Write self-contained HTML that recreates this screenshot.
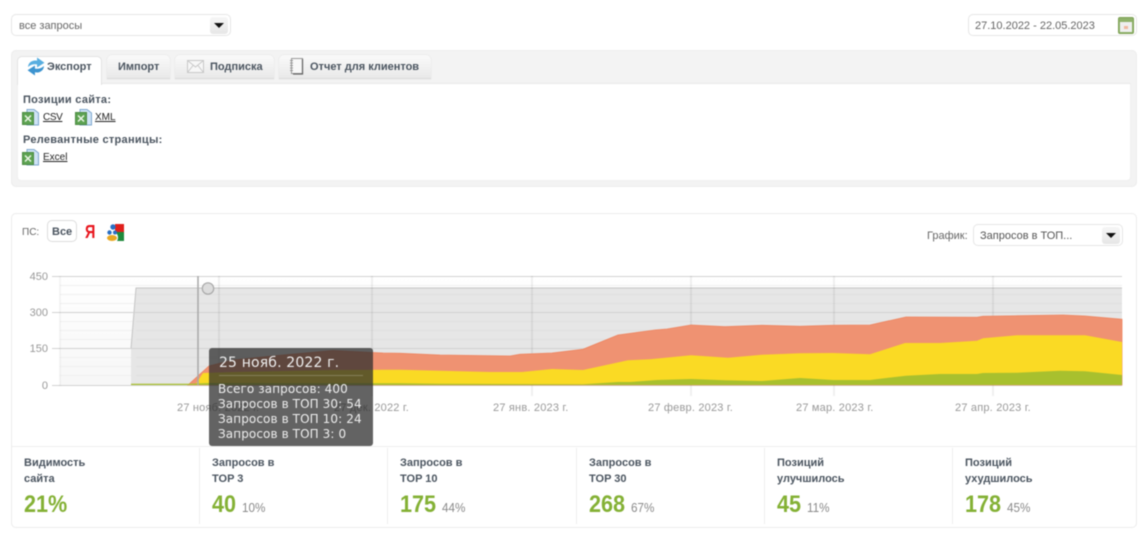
<!DOCTYPE html>
<html lang="ru"><head><meta charset="utf-8"><title>Экспорт</title>
<style>
html,body{margin:0;padding:0;background:#fff}
#p{position:relative;width:1143px;height:534px;overflow:hidden;font-family:"Liberation Sans",sans-serif;font-size:11px;color:#4b5560;filter:blur(.45px)}
#p div,#p a,#p svg{position:absolute}
.t{white-space:nowrap}
.box{background:#fff;border:1px solid #e6e6e6;border-radius:5px;box-sizing:border-box}
.arr{background:linear-gradient(#f6f6f6,#e6e6e6);border-radius:3px}
.arr:after{content:"";position:absolute;left:4px;top:6px;border-left:5px solid transparent;border-right:5px solid transparent;border-top:5px solid #111}
.tab{background:linear-gradient(#fafafa,#e9e9e9);border-radius:5px 5px 0 0;box-sizing:border-box;height:24px;top:54px;border-bottom:1px solid #ddd;box-shadow:0 0 1px #ccc}
.b{font-weight:bold;color:#4b5560}
.h{letter-spacing:.28px}
a.l{color:#222;text-decoration:underline;font-size:10px}
.sl{font-weight:bold;font-size:11px;line-height:16px;color:#4b5560;white-space:nowrap}
.n{font-weight:bold;font-size:24px;color:#84b135;line-height:28px;white-space:nowrap;transform:scaleX(.9);transform-origin:left}
.n span{font-weight:normal;font-size:13px;color:#8a8a8a}
.sep{width:1px;background:#eee;top:448px;height:76px}
.xl{color:#999;font-size:11px;white-space:nowrap;top:402px;letter-spacing:.2px}
.yl{color:#999;font-size:11px;right:auto;white-space:nowrap;text-align:right;width:24px;left:24px}
.tt{font-family:"DejaVu Sans",sans-serif;color:#eee;white-space:nowrap;font-size:12px;line-height:15px;letter-spacing:.1px}
</style></head><body><div id="p">

<div class="box" style="left:11px;top:14px;width:220px;height:22px"></div>
<div class="t" style="left:19px;top:20px;color:#666">все запросы</div>
<div class="arr" style="left:210px;top:17px;width:18px;height:17px"></div>

<div class="box" style="left:968px;top:14px;width:169px;height:22px"></div>
<div class="t" style="left:975px;top:20px;color:#666">27.10.2022 - 22.05.2023</div>
<svg style="left:1118px;top:17px" width="16" height="17" viewBox="0 0 16 17"><rect x=".5" y=".5" width="15" height="16" rx="1.500" fill="#8fb26a" stroke="#7da055"/><rect x="2" y="5" width="12" height="10" fill="#efefef"/><rect x="6" y="9" width="4" height="3" fill="#f0b8a0"/></svg>

<div style="left:11px;top:50px;width:1126px;height:137px;background:#f3f3f3;border:1px solid #ececec;border-radius:5px;box-sizing:border-box"></div>
<div style="left:17px;top:83px;width:1114px;height:98px;background:#fff;border-radius:0 0 4px 4px;border:1px solid #f0f0f0;border-top:1px solid #e8e8e8;box-sizing:border-box"></div>
<div style="left:17px;top:56px;width:85px;height:29px;background:#fff;border:1px solid #e2e2e2;border-bottom:none;border-radius:5px 5px 0 0;box-sizing:border-box"></div>
<svg style="left:26px;top:57px" width="20" height="19" viewBox="0 0 18 18"><path d="M1.500 9.500C1.500 5 6 2.500 10 3.500V.5L17 5.500 10 10V7C7 6.500 4 7 1.500 9.500Z" fill="#58aee0"/><path d="M16.500 8.500C16.500 13 12 15.500 8 14.500V17.500L1 12.500 8 8V11C11 11.500 14 11 16.500 8.500Z" fill="#3d94d0"/></svg>
<div class="t b" style="left:47px;top:61px">Экспорт</div>

<div class="tab" style="left:107px;top:55px;width:63px"></div>
<div class="t b" style="left:118px;top:61px">Импорт</div>
<div class="tab" style="left:175px;top:55px;width:99px"></div>
<svg style="left:187px;top:60px" width="17" height="13" viewBox="0 0 17 13"><rect x=".5" y=".5" width="16" height="12" fill="#f7f7f7" stroke="#c8c8c8"/><path d="M.5 .5 8.500 7 16.500 .5M.5 12.500 6 5.500M16.500 12.500 11 5.500" fill="none" stroke="#c8c8c8"/></svg>
<div class="t b" style="left:210px;top:61px">Подписка</div>
<div class="tab" style="left:279px;top:55px;width:152px"></div>
<svg style="left:290px;top:58px" width="14" height="17" viewBox="0 0 14 17"><rect x="1.500" y=".5" width="11" height="15" fill="#f8f8f8" stroke="#999"/><path d="M0 2.500H3M0 5H3M0 7.500H3M0 10H3M0 12.500H3" stroke="#999"/><path d="M12.500 1V16H3" fill="none" stroke="#666" stroke-width="1.300"/></svg>
<div class="t b" style="left:310px;top:61px">Отчет для клиентов</div>

<div class="t b h" style="left:23px;top:94px">Позиции сайта:</div>
<svg style="left:22px;top:109px" width="17" height="17" viewBox="0 0 17 17"><path d="M5 .5H12L16.500 4V16H5Z" fill="#cfe3f5" stroke="#7fa8cf"/><rect x=".5" y="3.500" width="11" height="12" fill="#5da352" stroke="#4c8b43"/><path d="M3 6.500 9 12.500M9 6.500 3 12.500" stroke="#eaf5e6" stroke-width="1.500"/></svg>
<a class="l t" style="left:43px;top:112px;letter-spacing:-.4px">CSV</a>
<svg style="left:75px;top:109px" width="17" height="17" viewBox="0 0 17 17"><path d="M5 .5H12L16.500 4V16H5Z" fill="#cfe3f5" stroke="#7fa8cf"/><rect x=".5" y="3.500" width="11" height="12" fill="#5da352" stroke="#4c8b43"/><path d="M3 6.500 9 12.500M9 6.500 3 12.500" stroke="#eaf5e6" stroke-width="1.500"/></svg>
<a class="l t" style="left:95px;top:112px">XML</a>
<div class="t b h" style="left:23px;top:134px">Релевантные страницы:</div>
<svg style="left:22px;top:149px" width="17" height="17" viewBox="0 0 17 17"><path d="M5 .5H12L16.500 4V16H5Z" fill="#cfe3f5" stroke="#7fa8cf"/><rect x=".5" y="3.500" width="11" height="12" fill="#5da352" stroke="#4c8b43"/><path d="M3 6.500 9 12.500M9 6.500 3 12.500" stroke="#eaf5e6" stroke-width="1.500"/></svg>
<a class="l t" style="left:43px;top:152px">Excel</a>

<div class="box" style="left:11px;top:213px;width:1126px;height:315px;border-color:#ececec"></div>
<div class="t" style="left:22px;top:227px;color:#666;font-size:10px">ПС:</div>
<div class="box" style="left:47px;top:220px;width:30px;height:22px;border-color:#ddd"></div>
<div class="t b" style="left:52px;top:226px">Все</div>
<div class="t" style="left:85px;top:222px;color:#e8141c;font-size:18px;font-weight:bold;line-height:21px;transform:scaleX(.8);transform-origin:left">Я</div>
<svg style="left:107px;top:224px" width="17" height="17" viewBox="0 0 17 17"><rect x="8" y="0" width="9" height="8" fill="#e0201c"/><path d="M8 8H17V17H10C12 14 11 10 8 8Z" fill="#1f8a3c"/><circle cx="6" cy="3" r="2.700" fill="#2a6fc4"/><circle cx="2.500" cy="8.500" r="2.200" fill="#2a6fc4"/><circle cx="8" cy="8.500" r="2" fill="#2a6fc4"/><ellipse cx="5" cy="14" rx="5" ry="3" fill="#e8a823"/></svg>

<div class="t" style="left:927px;top:230px;color:#666">График:</div>
<div class="box" style="left:973px;top:224px;width:150px;height:22px"></div>
<div class="t" style="left:980px;top:230px;color:#555">Запросов в ТОП...</div>
<div class="arr" style="left:1102px;top:227px;width:18px;height:17px"></div>

<svg style="left:0;top:0" width="1143" height="534" viewBox="0 0 1143 534">
<defs><linearGradient id="w" x1="0" x2="0" y1="0" y2="1"><stop offset="0" stop-color="#fff"/><stop offset="1" stop-color="#f7f7f7"/></linearGradient></defs>
<rect x="60" y="277" width="1062" height="108" fill="url(#w)"/>
<path d="M60 285.500H1122M60 294.500H1122M60 303.500H1122M60 321.500H1122M60 330.500H1122M60 339.500H1122M60 357.500H1122M60 366.500H1122M60 375.500H1122" stroke="#f0f0f0" fill="none"/>
<path d="M131 348.500 136 288H1122V385H131Z" fill="#e6e6e6"/>
<path d="M131 348.500 136 288H1122" fill="none" stroke="#c4c4c4"/>
<path d="M136 294.500H1122M136 303.500H1122M136 321.500H1122M136 330.500H1122M136 339.500H1122M136 357.500H1122M136 366.500H1122M136 375.500H1122" stroke="#e0e0e0" fill="none"/>
<path d="M52 276.500H1122M52 312.500H1122M52 348.500H1122M52 385.500H1122" stroke="#d2d2d2" fill="none"/>
<path d="M60 276V386" stroke="#000" stroke-opacity=".04" stroke-width="2" fill="none"/>
<path d="M219 276V396M372 276V396M532 276V396M691 276V396M834 276V396M993 276V396" stroke="#000" stroke-opacity=".06" stroke-width="2" fill="none"/>
<path d="M188 385 209 366 233 360 283 355 333 350.500 383 353 400 353.300 440 355 510 356 520 354.300 552 353 583 349.300 618 335 655 330 667 329 691 325 725 326.700 762 325.300 800 326.300 833 325.300 870 325 906 317 977 317.300 983 316.300 1063 315 1085 316 1122 319.300V385Z" fill="#ef9272" stroke="#ee8560" stroke-width=".8"/>
<path d="M195 385 203 373 233 372 333 370 400 369.700 440 370.700 490 372 522 372 552 369 583 370 628 360.300 650 359.300 691 355.300 728 357.700 762 354.700 800 353.300 833 353 870 354.300 905 343 940 343 977 340.700 983 338.300 1017 335.300 1085 335.300 1122 342V385Z" fill="#fada24"/>
<path d="M131 385V383.800H188L210 383 300 383.300 400 383.300 440 383.700 583 384.300 618 382 630 382 657 380 691 379 725 380.300 762 381 800 378 833 380 870 380 906 375.700 940 374 977 374 983 373 1017 372.700 1060 370.700 1085 371.300 1122 375V385Z" fill="#a8c02e"/>
<path d="M198 276V385" stroke="#a8a8a8" stroke-width="1.500"/>
<circle cx="208" cy="288.500" r="5.700" fill="#dcdcdc" stroke="#a9a9a9" stroke-width="1.200"/>
</svg>

<div class="yl" style="top:271px">450</div>
<div class="yl" style="top:307px">300</div>
<div class="yl" style="top:343px">150</div>
<div class="yl" style="top:380px">0</div>
<div class="xl" style="left:177px">27 нояб. 2022 г.</div>
<div class="xl" style="left:334px">27 дек. 2022 г.</div>
<div class="xl" style="left:493px">27 янв. 2023 г.</div>
<div class="xl" style="left:648px">27 февр. 2023 г.</div>
<div class="xl" style="left:796px">27 мар. 2023 г.</div>
<div class="xl" style="left:955px">27 апр. 2023 г.</div>

<div style="left:209px;top:348px;width:164px;height:98px;background:rgba(45,45,45,.74);border-radius:3px"></div>
<div class="tt" style="left:219px;top:355px;font-size:14px;line-height:17px;letter-spacing:.15px">25 нояб. 2022 г.</div>
<div style="left:219px;top:375px;width:144px;height:1px;background:rgba(255,255,255,.22)"></div>
<div class="tt" style="left:218px;top:382px">Всего запросов: 400</div>
<div class="tt" style="left:218px;top:397px">Запросов в ТОП 30: 54</div>
<div class="tt" style="left:218px;top:412px">Запросов в ТОП 10: 24</div>
<div class="tt" style="left:218px;top:427px">Запросов в ТОП 3: 0</div>

<div style="left:12px;top:446px;width:1124px;height:1px;background:#eee"></div>
<div class="sep" style="left:199px"></div>
<div class="sep" style="left:387px"></div>
<div class="sep" style="left:576px"></div>
<div class="sep" style="left:764px"></div>
<div class="sep" style="left:952px"></div>

<div class="sl" style="left:24px;top:455px">Видимость<br>сайта</div>
<div class="n" style="left:24px;top:491px">21%</div>
<div class="sl" style="left:212px;top:455px">Запросов в<br>TOP 3</div>
<div class="n" style="left:212px;top:491px">40 <span>10%</span></div>
<div class="sl" style="left:400px;top:455px">Запросов в<br>TOP 10</div>
<div class="n" style="left:400px;top:491px">175 <span>44%</span></div>
<div class="sl" style="left:589px;top:455px">Запросов в<br>TOP 30</div>
<div class="n" style="left:589px;top:491px">268 <span>67%</span></div>
<div class="sl" style="left:777px;top:455px">Позиций<br>улучшилось</div>
<div class="n" style="left:777px;top:491px">45 <span>11%</span></div>
<div class="sl" style="left:965px;top:455px">Позиций<br>ухудшилось</div>
<div class="n" style="left:965px;top:491px">178 <span>45%</span></div>

</div></body></html>
